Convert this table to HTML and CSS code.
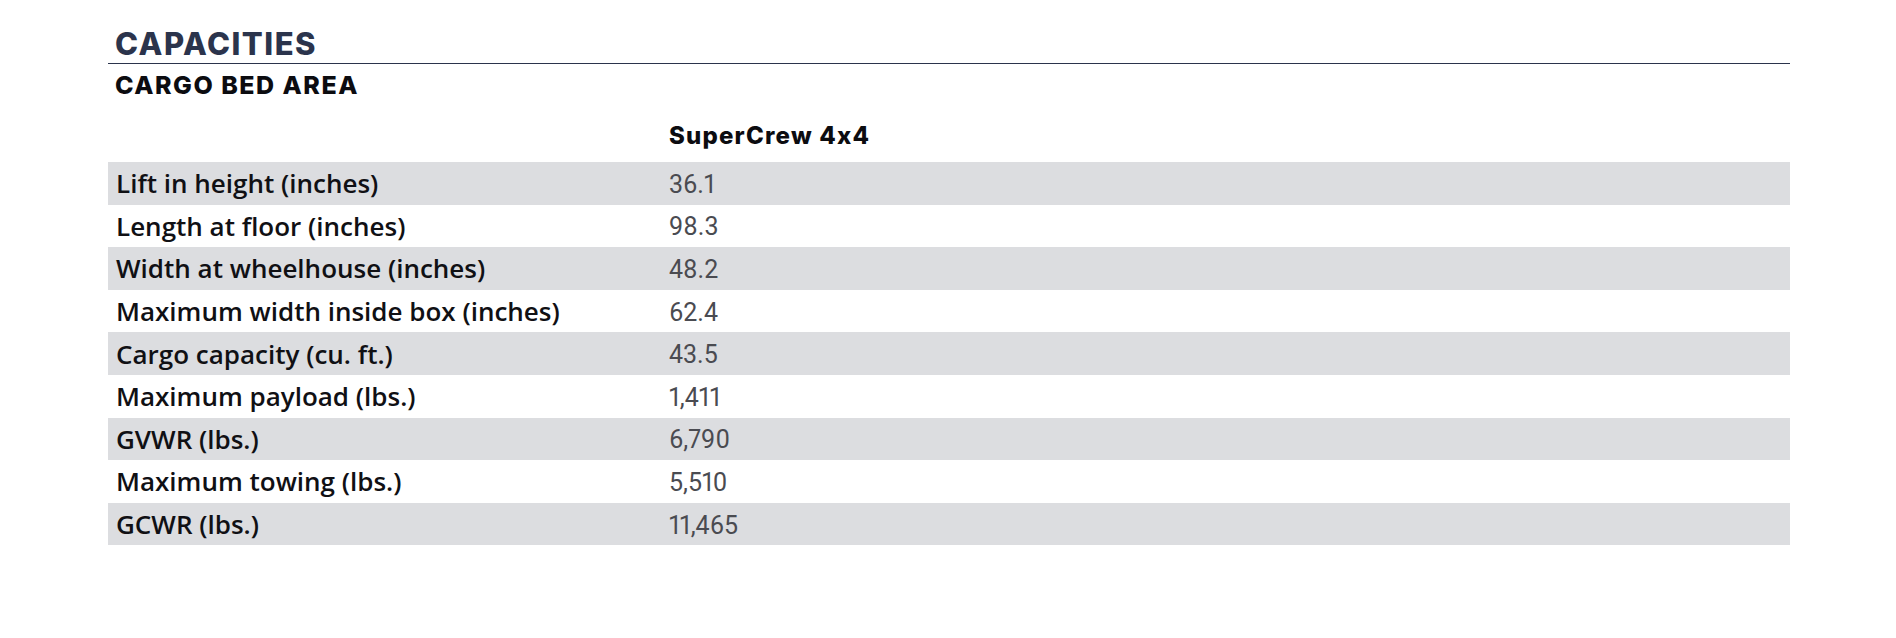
FILE: index.html
```html
<!DOCTYPE html>
<html lang="en">
<head>
<meta charset="utf-8">
<title>Capacities</title>
<link rel="stylesheet" href="styles.css">
</head>
<body>
<section class="sheet">
  <h1 class="title">CAPACITIES</h1>
  <h2 class="subtitle">CARGO BED AREA</h2>
  <div class="specs">
    <div class="row head"><span class="label"></span><span class="col-head">SuperCrew 4x4</span></div>
    <div class="row shade"><span class="label">Lift in height (inches)</span><span class="value">36.1</span></div>
    <div class="row"><span class="label">Length at floor (inches)</span><span class="value">98.3</span></div>
    <div class="row shade"><span class="label">Width at wheelhouse (inches)</span><span class="value">48.2</span></div>
    <div class="row"><span class="label">Maximum width inside box (inches)</span><span class="value">62.4</span></div>
    <div class="row shade"><span class="label">Cargo capacity (cu. ft.)</span><span class="value">43.5</span></div>
    <div class="row"><span class="label">Maximum payload (lbs.)</span><span class="value">1,411</span></div>
    <div class="row shade"><span class="label">GVWR (lbs.)</span><span class="value">6,790</span></div>
    <div class="row"><span class="label">Maximum towing (lbs.)</span><span class="value">5,510</span></div>
    <div class="row shade"><span class="label">GCWR (lbs.)</span><span class="value">11,465</span></div>
  </div>
</section>
</body>
</html>
```

FILE: styles.css
```css
html, body {
  margin: 0;
  padding: 0;
  background: #ffffff;
}

.sheet {
  margin-left: 108px;
  width: 1682px;
  padding-top: 24px;
}

.title {
  margin: 0;
  padding-left: 7px;
  font-family: "Inter", "Liberation Sans", sans-serif;
  font-weight: 800;
  font-size: 31px;
  line-height: 39px;
  color: #2b344c;
  border-bottom: 1px solid #2b344c;
  letter-spacing: 1.5px;
}

.subtitle {
  margin: 0;
  padding-left: 7px;
  font-family: "Inter", "Liberation Sans", sans-serif;
  font-weight: 800;
  font-size: 25px;
  line-height: 42px;
  color: #0c0c10;
  letter-spacing: 1.5px;
}

.specs {
  display: flex;
  flex-direction: column;
}

.row {
  display: grid;
  grid-template-columns: 561px 1fr;
  height: 42.6px;
  align-items: center;
}

.row.head {
  height: 56px;
  align-items: start;
  padding-top: 15px;
  box-sizing: border-box;
}

.row.shade {
  background: #dcdde0;
}

.label {
  padding-left: 8px;
  font-family: "Open Sans", "Liberation Sans", sans-serif;
  font-size: 26px;
  font-weight: 600;
  color: #101014;
}

.value {
  padding-top: 2px;
  font-family: "Roboto", "Liberation Sans", sans-serif;
  font-size: 25px;
  font-weight: 400;
  color: #4a4b51;
  font-variant-numeric: proportional-nums;
}

.col-head {
  font-family: "Inter", "Liberation Sans", sans-serif;
  font-weight: 800;
  font-size: 24px;
  line-height: 29px;
  color: #0c0c10;
  letter-spacing: 1.2px;
  font-feature-settings: "calt" 0;
}
```
